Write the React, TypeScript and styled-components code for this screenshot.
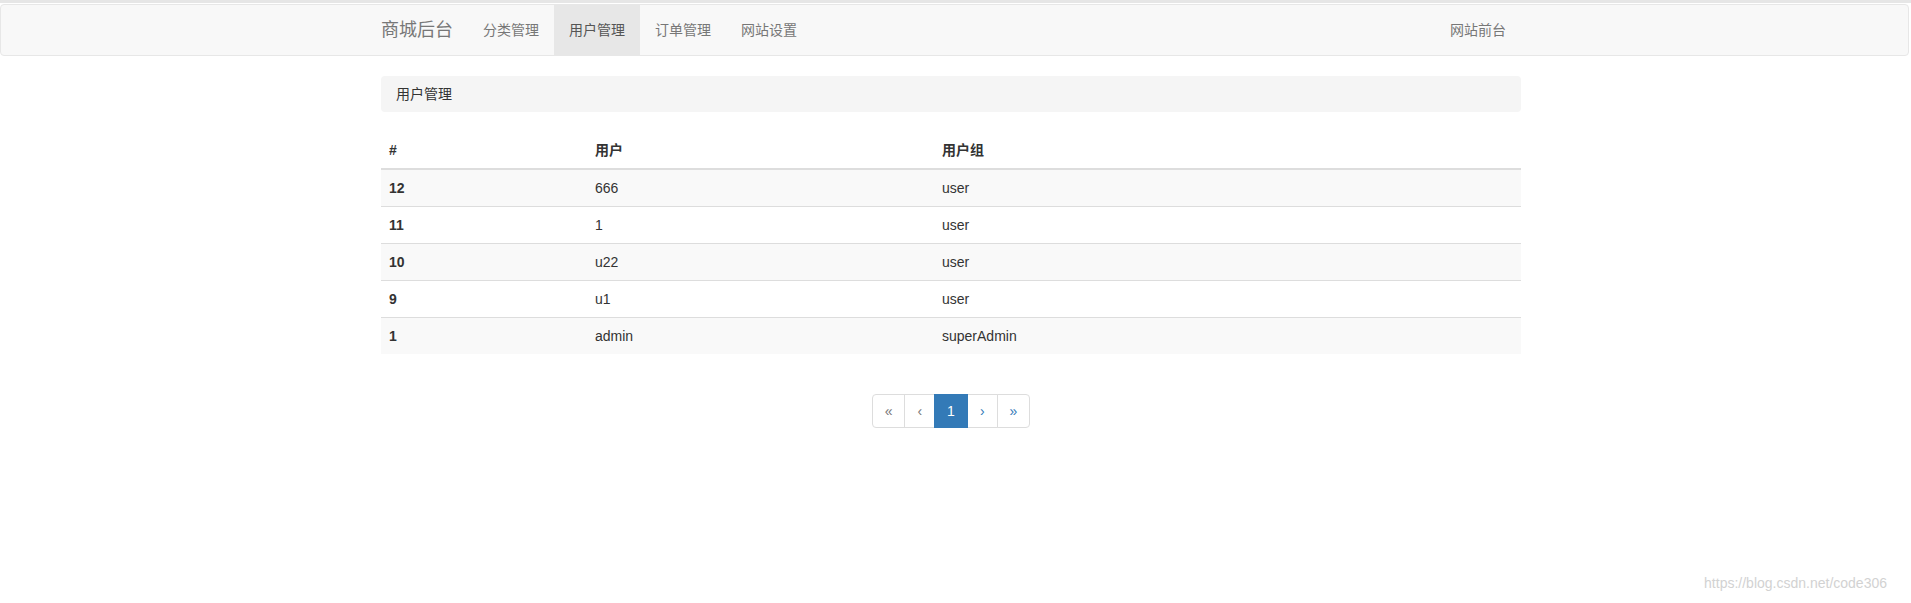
import React from "react";
import styled, { createGlobalStyle } from "styled-components";

const GlobalStyle = createGlobalStyle`
  * { box-sizing: border-box; }
  body {
    margin: 0;
    background: #fff;
    color: #333;
    font-family: "Liberation Sans", Arial, "Noto Sans CJK SC", sans-serif;
    font-size: 14px;
    line-height: 1.42857143;
  }
`;

const Page = styled.div`
  position: relative;
  width: 1911px;
  min-height: 603px;
  overflow: hidden;
`;

const TopStrip = styled.div`
  height: 3px;
  background: #e6e6e6;
  margin-bottom: 1px;
`;

const Navbar = styled.nav`
  width: 1909px;
  min-height: 52px;
  padding-right: 7px;
  margin-bottom: 20px;
  background: #f8f8f8;
  border: 1px solid #e7e7e7;
  border-radius: 4px;
`;

const Main = styled.main`
  padding-right: 9px;
`;

const Container = styled.div`
  width: 1170px;
  margin: 0 auto;
  padding: 0 15px;
`;

const NavRow = styled.div`
  display: flex;
  align-items: stretch;
  margin-left: -15px;
`;

const Brand = styled.a`
  display: block;
  height: 50px;
  padding: 15px;
  font-size: 18px;
  line-height: 20px;
  color: #777;
  text-decoration: none;
`;

const NavList = styled.ul<{ $right?: boolean }>`
  display: flex;
  list-style: none;
  margin: 0;
  padding: 0;
  margin-left: ${(p) => (p.$right ? "auto" : "0")};
`;

const NavLink = styled.a<{ $active?: boolean }>`
  display: block;
  padding: 15px;
  line-height: 20px;
  font-size: 14px;
  color: ${(p) => (p.$active ? "#555" : "#777")};
  background: ${(p) => (p.$active ? "#e7e7e7" : "transparent")};
  text-decoration: none;
`;

const Breadcrumb = styled.div`
  padding: 8px 15px;
  margin-bottom: 20px;
  background: #f5f5f5;
  border-radius: 4px;
  color: #333;
`;

const Table = styled.table`
  width: 100%;
  margin-bottom: 20px;
  border-collapse: collapse;
  border-spacing: 0;

  th,
  td {
    padding: 8px;
    line-height: 20px;
    text-align: left;
    vertical-align: top;
  }

  thead th {
    font-weight: bold;
    border-bottom: 2px solid #ddd;
    vertical-align: bottom;
  }

  tbody td,
  tbody th {
    border-top: 1px solid #ddd;
  }

  tbody tr:nth-of-type(odd) {
    background: #f9f9f9;
  }

  tbody th {
    font-weight: bold;
  }
`;

const Pager = styled.ul`
  display: flex;
  justify-content: center;
  list-style: none;
  margin: 40px 0 20px;
  padding: 0;
`;

const PageItem = styled.li<{ $active?: boolean; $disabled?: boolean }>`
  margin-left: -1px;
  padding: 6px 12px;
  line-height: 20px;
  border: 1px solid ${(p) => (p.$active ? "#337ab7" : "#ddd")};
  background: ${(p) => (p.$active ? "#337ab7" : "#fff")};
  color: ${(p) => (p.$active ? "#fff" : p.$disabled ? "#777" : "#337ab7")};
  position: ${(p) => (p.$active ? "relative" : "static")};

  &:first-child {
    margin-left: 0;
    border-top-left-radius: 4px;
    border-bottom-left-radius: 4px;
  }
  &:last-child {
    border-top-right-radius: 4px;
    border-bottom-right-radius: 4px;
  }
`;

const Watermark = styled.div`
  position: absolute;
  right: 24px;
  bottom: 10px;
  font-size: 14px;
  color: #d2d2d2;
`;

const users = [
  { id: 12, name: "666", group: "user" },
  { id: 11, name: "1", group: "user" },
  { id: 10, name: "u22", group: "user" },
  { id: 9, name: "u1", group: "user" },
  { id: 1, name: "admin", group: "superAdmin" },
];

const menu = ["分类管理", "用户管理", "订单管理", "网站设置"];

export default function App() {
  return (
    <Page>
      <GlobalStyle />
      <TopStrip />
      <Navbar>
        <Container>
          <NavRow>
            <Brand href="#">商城后台</Brand>
            <NavList>
              {menu.map((m) => (
                <li key={m}>
                  <NavLink href="#" $active={m === "用户管理"}>{m}</NavLink>
                </li>
              ))}
            </NavList>
            <NavList $right>
              <li>
                <NavLink href="#">网站前台</NavLink>
              </li>
            </NavList>
          </NavRow>
        </Container>
      </Navbar>
      <Main>
        <Container>
          <Breadcrumb>用户管理</Breadcrumb>
          <Table>
            <colgroup>
              <col style={{ width: 206 }} />
              <col style={{ width: 347 }} />
              <col />
            </colgroup>
            <thead>
              <tr>
                <th>#</th>
                <th>用户</th>
                <th>用户组</th>
              </tr>
            </thead>
            <tbody>
              {users.map((u) => (
                <tr key={u.id}>
                  <th>{u.id}</th>
                  <td>{u.name}</td>
                  <td>{u.group}</td>
                </tr>
              ))}
            </tbody>
          </Table>
          <Pager>
            <PageItem $disabled>«</PageItem>
            <PageItem $disabled>‹</PageItem>
            <PageItem $active>1</PageItem>
            <PageItem>›</PageItem>
            <PageItem>»</PageItem>
          </Pager>
        </Container>
      </Main>
      <Watermark>https://blog.csdn.net/code306</Watermark>
    </Page>
  );
}
